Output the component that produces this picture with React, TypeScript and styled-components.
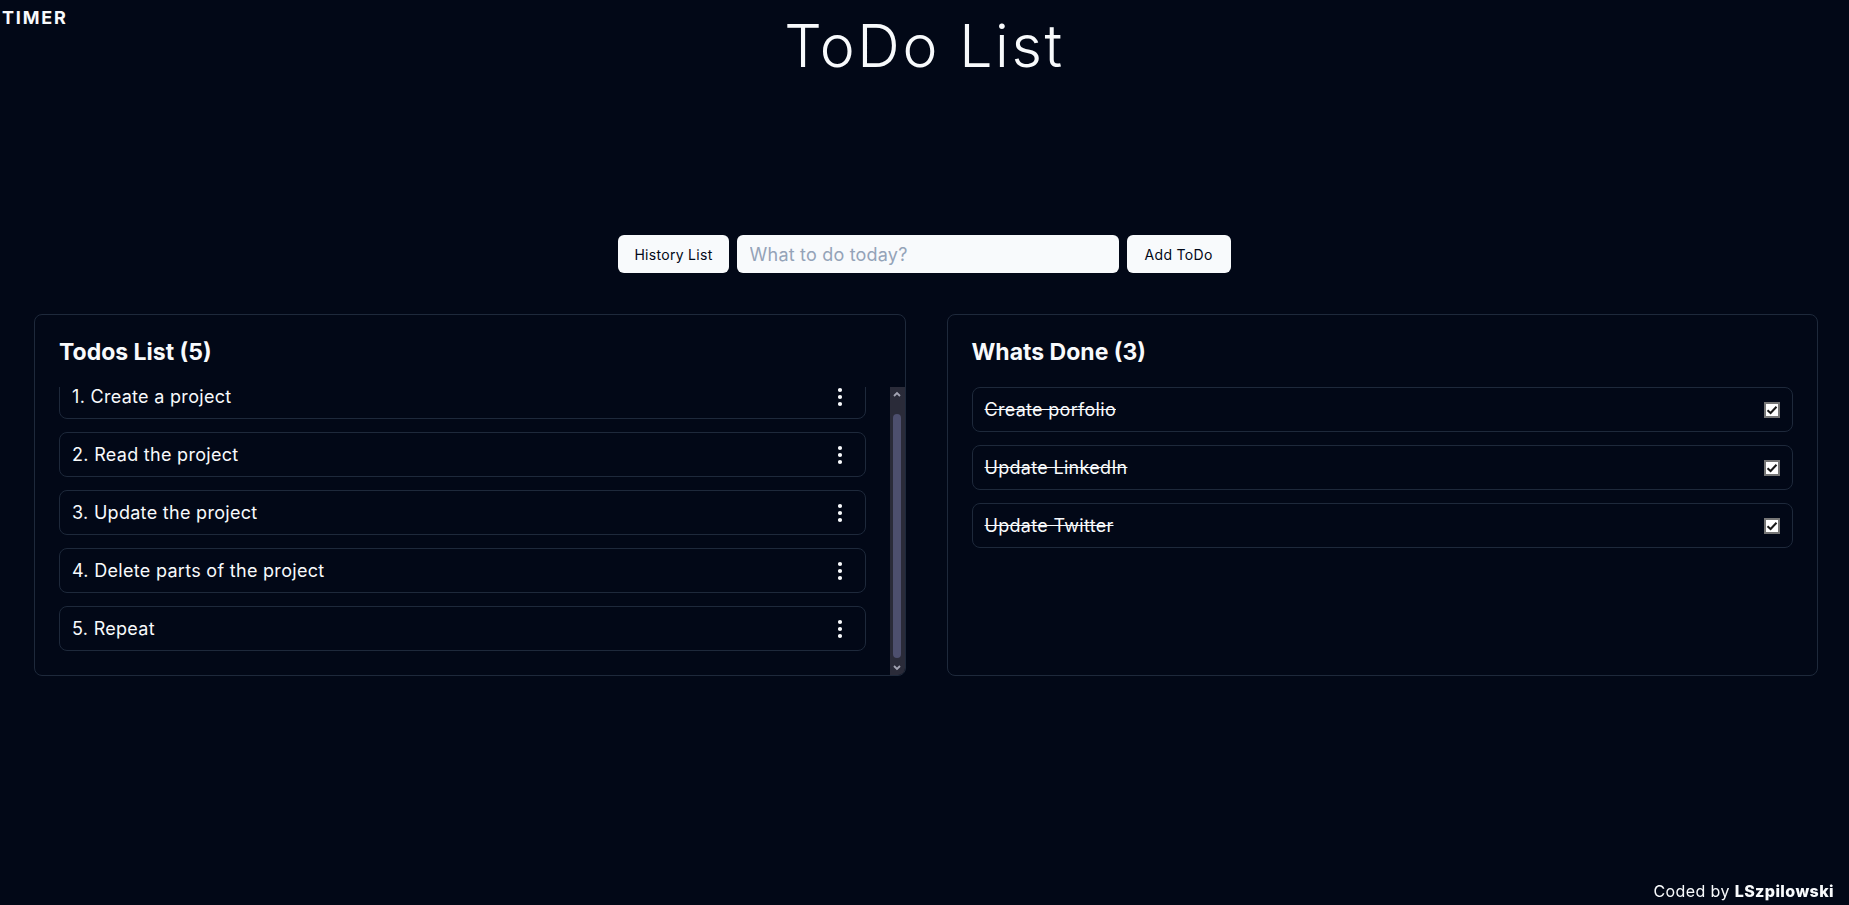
import { useLayoutEffect, useRef } from 'react';
import styled, { createGlobalStyle } from 'styled-components';
import { EllipsisVertical } from 'lucide-react';

const palette = {
	bg: '#020817',
	border: '#1e293b',
	text: '#f8fafc',
	light: '#f8fafc',
	dark: '#020817',
	muted: '#94a3b8',
	track: '#2a2b39',
	thumb: '#4d4f6e',
	arrow: '#a3a4b3',
};

const GlobalStyle = createGlobalStyle`
	html, body {
		margin: 0;
		padding: 0;
		background: ${palette.bg};
		color: ${palette.text};
		font-family: Inter, "Noto Sans", "Liberation Sans", sans-serif;
	}

	* {
		box-sizing: border-box;
	}
`;

const Page = styled.div`
	min-height: 905px;
	position: relative;
`;

const Header = styled.header`
	position: relative;
	padding-top: 10px;
	text-align: center;
`;

const TimerLink = styled.a`
	position: absolute;
	top: 7px;
	left: 2px;
	color: ${palette.text};
	font-size: 18px;
	font-weight: 700;
	letter-spacing: 1.8px;
	text-decoration: none;
`;

const Title = styled.h1`
	margin: 0;
	font-size: 59px;
	font-weight: 300;
	letter-spacing: 2.6px;
	line-height: 72px;
`;

const Controls = styled.form`
	display: flex;
	justify-content: center;
	gap: 8px;
	margin-top: 153px;
`;

const Button = styled.button<{ $wide?: boolean }>`
	height: 38px;
	padding: 0 ${({ $wide }) => ($wide ? 18 : 16)}px;
	border: 0;
	border-radius: 6px;
	background: ${palette.light};
	color: ${palette.dark};
	font-family: inherit;
	font-size: 14px;
	font-weight: 400;
	letter-spacing: 0.3px;
	cursor: pointer;
`;

const Input = styled.input`
	width: 382px;
	height: 38px;
	padding: 0 13px;
	border: 0;
	border-radius: 6px;
	background: ${palette.light};
	color: ${palette.dark};
	font-family: inherit;
	font-size: 18px;
	letter-spacing: 0.2px;

	&::placeholder {
		color: ${palette.muted};
	}
`;

const Columns = styled.main`
	display: grid;
	grid-template-columns: 1fr 1fr;
	gap: 41px;
	padding: 0 31px 0 34px;
	margin-top: 41px;
`;

const Panel = styled.section`
	display: flex;
	flex-direction: column;
	height: 362px;
	border: 1px solid ${palette.border};
	border-radius: 8px;
	overflow: hidden;
`;

const PanelTitle = styled.h2`
	margin: 0;
	padding: 21px 24px 0;
	height: 72px;
	font-size: 23px;
	font-weight: 700;
	line-height: 32px;
`;

const ListArea = styled.div`
	position: relative;
	flex: 1;
	min-height: 0;
`;

const List = styled.ul<{ $scroll?: boolean }>`
	display: flex;
	flex-direction: column;
	gap: 13px;
	height: 100%;
	margin: 0;
	padding: 0 ${({ $scroll }) => ($scroll ? 39 : 24)}px 24px 24px;
	list-style: none;
	overflow: hidden;
`;

const ScrollTrack = styled.div`
	position: absolute;
	top: 0;
	right: 0;
	bottom: 0;
	display: flex;
	flex-direction: column;
	width: 15px;
	background: ${palette.track};
`;

const ScrollArrow = styled.div`
	display: flex;
	align-items: center;
	justify-content: center;
	height: 14px;
	color: ${palette.arrow};
`;

const ScrollThumb = styled.div`
	flex: 1;
	margin: 13px 3.5px 3px;
	border-radius: 4px;
	background: ${palette.thumb};
`;

const Item = styled.li`
	display: flex;
	flex: 0 0 45px;
	align-items: center;
	justify-content: space-between;
	padding: 0 13px 0 12px;
	border: 1px solid ${palette.border};
	border-radius: 8px;
	font-size: 18px;
	letter-spacing: 0.3px;
`;

const ItemText = styled.span<{ $done?: boolean }>`
	text-decoration: ${({ $done }) => ($done ? 'line-through' : 'none')};
`;

const MenuButton = styled.button`
	display: flex;
	padding: 0;
	border: 0;
	background: transparent;
	color: ${palette.text};
	cursor: pointer;
`;

const CheckBox = styled.span`
	display: flex;
	align-items: center;
	justify-content: center;
	width: 16px;
	height: 16px;
	margin-right: -1px;
	border: 2px solid #767676;
	background: #ffffff;
	color: #1a1a1a;
`;

const Footer = styled.footer`
	position: fixed;
	right: 15px;
	bottom: 4px;
	font-size: 16px;
	letter-spacing: 0.4px;
`;

const Author = styled.strong`
	font-weight: 800;
`;

const todos = [
	'Create a project',
	'Read the project',
	'Update the project',
	'Delete parts of the project',
	'Repeat',
];

const done = ['Create porfolio', 'Update LinkedIn', 'Update Twitter'];

const Check = () => (
	<svg width="12" height="12" viewBox="0 0 12 12" fill="none">
		<path d="M1.5 6.2 L4.6 9 L10.5 2.8" stroke="currentColor" strokeWidth="2" />
	</svg>
);

const Chevron = ({ up }: { up?: boolean }) => (
	<svg width="8" height="6" viewBox="0 0 8 6" fill="none">
		<path
			d={up ? 'M1 5 L4 2 L7 5' : 'M1 1 L4 4 L7 1'}
			stroke="currentColor"
			strokeWidth="1.8"
		/>
	</svg>
);

export default function App() {
	const listRef = useRef<HTMLUListElement>(null);

	useLayoutEffect(() => {
		if (listRef.current) {
			listRef.current.scrollTop = listRef.current.scrollHeight;
		}
	}, []);

	return (
		<Page>
			<GlobalStyle />
			<Header>
				<TimerLink href="#">TIMER</TimerLink>
				<Title>ToDo List</Title>
			</Header>

			<Controls onSubmit={(e) => e.preventDefault()}>
				<Button type="button">History List</Button>
				<Input placeholder="What to do today?" />
				<Button type="submit" $wide>
					Add ToDo
				</Button>
			</Controls>

			<Columns>
				<Panel>
					<PanelTitle>Todos List ({todos.length})</PanelTitle>
					<ListArea>
						<List $scroll ref={listRef}>
							{todos.map((todo, i) => (
								<Item key={todo}>
									<ItemText>
										{i + 1}. {todo}
									</ItemText>
									<MenuButton aria-label="menu">
										<EllipsisVertical size={24} strokeWidth={2.2} />
									</MenuButton>
								</Item>
							))}
						</List>
						<ScrollTrack>
							<ScrollArrow>
								<Chevron up />
							</ScrollArrow>
							<ScrollThumb />
							<ScrollArrow>
								<Chevron />
							</ScrollArrow>
						</ScrollTrack>
					</ListArea>
				</Panel>

				<Panel>
					<PanelTitle>Whats Done ({done.length})</PanelTitle>
					<ListArea>
						<List>
							{done.map((todo) => (
								<Item key={todo}>
									<ItemText $done>{todo}</ItemText>
									<CheckBox>
										<Check />
									</CheckBox>
								</Item>
							))}
						</List>
					</ListArea>
				</Panel>
			</Columns>

			<Footer>
				Coded by <Author>LSzpilowski</Author>
			</Footer>
		</Page>
	);
}
